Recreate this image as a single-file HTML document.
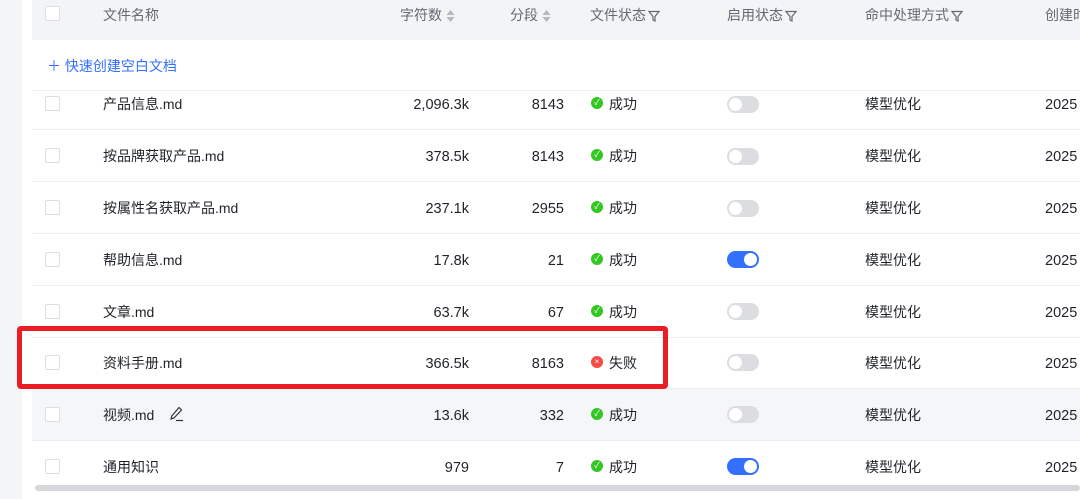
<!DOCTYPE html><html><head><meta charset="utf-8"><style>
*{margin:0;padding:0;box-sizing:border-box}
body{width:1080px;height:499px;overflow:hidden;background:#fff;font-family:"Liberation Sans","Noto Sans CJK SC",sans-serif;font-size:14px;color:#1f2329;position:relative}
.strip{position:absolute;left:0;top:0;width:22px;height:499px;background:#f4f5f7}
.hdr{position:absolute;left:32px;top:0;width:1048px;height:40px;background:#f3f4f6;color:#646a73}
.abs{position:absolute;white-space:nowrap}
.n{margin-top:3px;font-size:14.5px}
.cb{position:absolute;left:45px;width:15px;height:15px;border:1px solid #dcdee2;border-radius:2px;background:#fff}
.row{position:absolute;left:32px;width:1048px;height:52px;border-bottom:1px solid #eceef1}
.sw{position:absolute;left:727px;width:32px;height:17px;border-radius:9px;background:#dcdde0}
.sw::after{content:"";position:absolute;left:2px;top:2px;width:13px;height:13px;border-radius:50%;background:#fff}
.sw.on{background:#3370ff}.sw.on::after{left:17px}
.ok,.bad{position:absolute;left:591px;width:12px;height:12px;border-radius:50%;background:#34c724;color:#fff;font-size:8px;line-height:12px;text-align:center}
.bad{background:#f54a45}
.r{text-align:right}
.srt{display:inline-block;vertical-align:middle;margin-left:4px}
.f{display:inline-block;vertical-align:middle;margin-left:2px}
</style></head><body>
<div class="strip"></div>
<div class="hdr"></div>
<div class="cb" style="top:6px"></div>
<div class="abs" style="left:103px;top:5px;color:#646a73">文件名称</div>
<div class="abs" style="left:400px;top:5px;color:#646a73">字符数<svg class="srt" width="9" height="14" viewBox="0 0 9 14"><path d="M4.5 1L8.5 6H0.5Z M4.5 13L8.5 8H0.5Z" fill="#b4b7bd"/></svg></div>
<div class="abs" style="left:510px;top:5px;color:#646a73">分段<svg class="srt" width="9" height="14" viewBox="0 0 9 14"><path d="M4.5 1L8.5 6H0.5Z M4.5 13L8.5 8H0.5Z" fill="#b4b7bd"/></svg></div>
<div class="abs" style="left:590px;top:5px;color:#646a73">文件状态<svg class="f" width="12" height="12" viewBox="0 0 12 12"><path d="M1 1.5H11L7 6.5V11L5 10V6.5Z" fill="none" stroke="#646a73" stroke-width="1.2"/></svg></div>
<div class="abs" style="left:727px;top:5px;color:#646a73">启用状态<svg class="f" width="12" height="12" viewBox="0 0 12 12"><path d="M1 1.5H11L7 6.5V11L5 10V6.5Z" fill="none" stroke="#646a73" stroke-width="1.2"/></svg></div>
<div class="abs" style="left:865px;top:5px;color:#646a73">命中处理方式<svg class="f" width="12" height="12" viewBox="0 0 12 12"><path d="M1 1.5H11L7 6.5V11L5 10V6.5Z" fill="none" stroke="#646a73" stroke-width="1.2"/></svg></div>
<div class="abs" style="left:1045px;top:5px;color:#646a73">创建时</div>
<div class="abs" style="left:47px;top:56px;color:#3370ff">＋ 快速创建空白文档</div>
<div class="row" style="top:90px;height:40px;border-top:1px solid #eceef1"></div>
<div class="row" style="top:130px"></div>
<div class="row" style="top:182px"></div>
<div class="row" style="top:234px"></div>
<div class="row" style="top:286px"></div>
<div class="row" style="top:337px"></div>
<div class="row" style="top:389px;background:#f5f6f8"></div>
<div class="row" style="top:441px;border:0"></div>

<div class="cb" style="top:96px"></div><div class="abs" style="left:103px;top:94px">产品信息.md</div><div class="abs r n" style="right:611px;top:94px">2,096.3k</div><div class="abs r n" style="right:516px;top:94px">8143</div><div class="ok" style="top:97px">✓</div><div class="abs" style="left:609px;top:94px">成功</div><div class="sw" style="top:96px"></div><div class="abs" style="left:865px;top:94px">模型优化</div><div class="abs n" style="left:1045px;top:94px">2025</div>
<div class="cb" style="top:148px"></div><div class="abs" style="left:103px;top:146px">按品牌获取产品.md</div><div class="abs r n" style="right:611px;top:146px">378.5k</div><div class="abs r n" style="right:516px;top:146px">8143</div><div class="ok" style="top:149px">✓</div><div class="abs" style="left:609px;top:146px">成功</div><div class="sw" style="top:148px"></div><div class="abs" style="left:865px;top:146px">模型优化</div><div class="abs n" style="left:1045px;top:146px">2025</div>
<div class="cb" style="top:200px"></div><div class="abs" style="left:103px;top:198px">按属性名获取产品.md</div><div class="abs r n" style="right:611px;top:198px">237.1k</div><div class="abs r n" style="right:516px;top:198px">2955</div><div class="ok" style="top:201px">✓</div><div class="abs" style="left:609px;top:198px">成功</div><div class="sw" style="top:200px"></div><div class="abs" style="left:865px;top:198px">模型优化</div><div class="abs n" style="left:1045px;top:198px">2025</div>
<div class="cb" style="top:252px"></div><div class="abs" style="left:103px;top:250px">帮助信息.md</div><div class="abs r n" style="right:611px;top:250px">17.8k</div><div class="abs r n" style="right:516px;top:250px">21</div><div class="ok" style="top:253px">✓</div><div class="abs" style="left:609px;top:250px">成功</div><div class="sw on" style="top:251px"></div><div class="abs" style="left:865px;top:250px">模型优化</div><div class="abs n" style="left:1045px;top:250px">2025</div>
<div class="cb" style="top:304px"></div><div class="abs" style="left:103px;top:302px">文章.md</div><div class="abs r n" style="right:611px;top:302px">63.7k</div><div class="abs r n" style="right:516px;top:302px">67</div><div class="ok" style="top:305px">✓</div><div class="abs" style="left:609px;top:302px">成功</div><div class="sw" style="top:303px"></div><div class="abs" style="left:865px;top:302px">模型优化</div><div class="abs n" style="left:1045px;top:302px">2025</div>
<div class="cb" style="top:355px"></div><div class="abs" style="left:103px;top:353px">资料手册.md</div><div class="abs r n" style="right:611px;top:353px">366.5k</div><div class="abs r n" style="right:516px;top:353px">8163</div><div class="bad" style="top:356px">×</div><div class="abs" style="left:609px;top:353px">失败</div><div class="sw" style="top:354px"></div><div class="abs" style="left:865px;top:353px">模型优化</div><div class="abs n" style="left:1045px;top:353px">2025</div>
<div class="cb" style="top:407px"></div><div class="abs" style="left:103px;top:405px">视频.md</div><svg class="abs" style="left:168px;top:405px" width="18" height="18" viewBox="0 0 18 18"><path d="M11 2.5L13.5 5L6 13L3 14L3.8 11Z" fill="none" stroke="#333" stroke-width="1.2"/><path d="M8 15.5H15" stroke="#333" stroke-width="1.2"/></svg><div class="abs r n" style="right:611px;top:405px">13.6k</div><div class="abs r n" style="right:516px;top:405px">332</div><div class="ok" style="top:408px">✓</div><div class="abs" style="left:609px;top:405px">成功</div><div class="sw" style="top:406px"></div><div class="abs" style="left:865px;top:405px">模型优化</div><div class="abs n" style="left:1045px;top:405px">2025</div>
<div class="cb" style="top:459px"></div><div class="abs" style="left:103px;top:457px">通用知识</div><div class="abs r n" style="right:611px;top:457px">979</div><div class="abs r n" style="right:516px;top:457px">7</div><div class="ok" style="top:460px">✓</div><div class="abs" style="left:609px;top:457px">成功</div><div class="sw on" style="top:458px"></div><div class="abs" style="left:865px;top:457px">模型优化</div><div class="abs n" style="left:1045px;top:457px">2025</div>

<div class="abs" style="left:35px;top:485px;width:1045px;height:6px;border-radius:3px;background:#d6d7da"></div>
<div class="abs" style="left:17px;top:326px;width:651px;height:63px;border:5px solid #ec1c24;border-radius:4px"></div>
</body></html>
